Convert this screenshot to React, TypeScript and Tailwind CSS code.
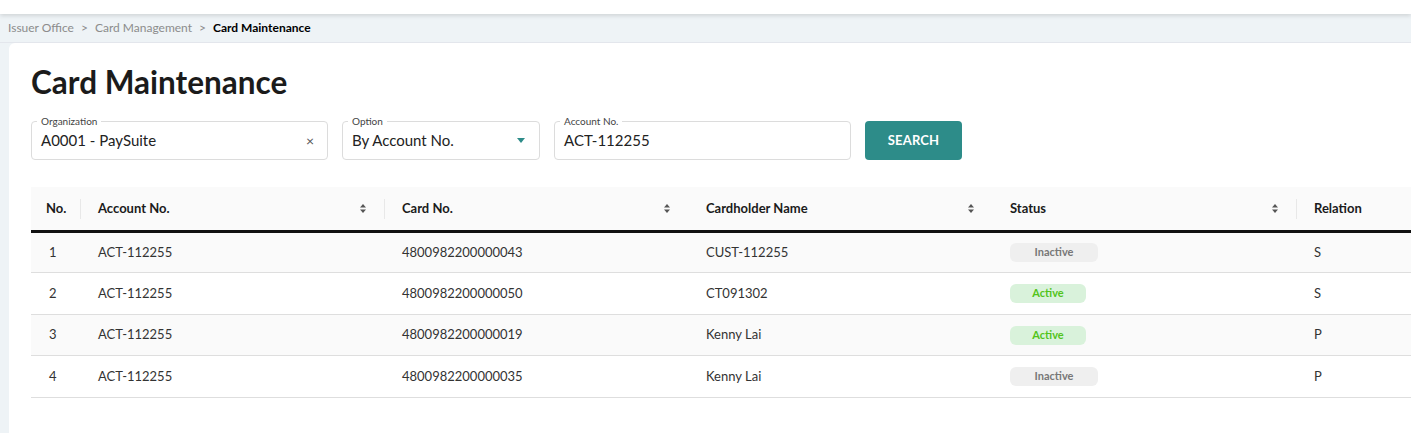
import React from 'react';

const rows = [
  { no: 1, account: 'ACT-112255', card: '4800982200000043', name: 'CUST-112255', active: false, relation: 'S' },
  { no: 2, account: 'ACT-112255', card: '4800982200000050', name: 'CT091302', active: true, relation: 'S' },
  { no: 3, account: 'ACT-112255', card: '4800982200000019', name: 'Kenny Lai', active: true, relation: 'P' },
  { no: 4, account: 'ACT-112255', card: '4800982200000035', name: 'Kenny Lai', active: false, relation: 'P' },
];

function SortIcon() {
  return (
    <svg width="6" height="9" viewBox="0 0 6 9" className="fill-[#555]">
      <path d="M3 0 L6 3.5 H0 Z" />
      <path d="M3 9 L6 5.5 H0 Z" />
    </svg>
  );
}

function Field({ label, children, width }: { label: string; children: React.ReactNode; width: string }) {
  return (
    <div className={`relative h-[39px] ${width} rounded-[4px] border border-[#dcdcdc] flex items-center px-[9px]`}>
      <span className="absolute -top-[7px] left-[5px] bg-white px-[4px] text-[10px] leading-[12px] text-[#444]">{label}</span>
      {children}
    </div>
  );
}

export default function App() {
  return (
    <div className="w-[1411px] h-[433px] overflow-hidden bg-[#eef3f6] font-['Lato',sans-serif] text-[#333]">
      {/* Top header strip */}
      <div className="h-[14px] bg-white shadow-[0_2px_4px_rgba(0,0,0,0.12)] relative z-10" />

      {/* Breadcrumb */}
      <div className="h-[29px] flex items-center px-[8px] text-[12px] gap-[7px] border-b border-[#e3e6ec]">
        <span className="text-[#8c8c8c]">Issuer Office</span>
        <span className="text-[#8c8c8c]">&gt;</span>
        <span className="text-[#8c8c8c]">Card Management</span>
        <span className="text-[#8c8c8c]">&gt;</span>
        <span className="font-bold text-black">Card Maintenance</span>
      </div>

      {/* Main card */}
      <div className="ml-[9px] h-full bg-white rounded-tl-[6px] pl-[22px] pt-[21px]">
        <h1 className="text-[31.5px] leading-[36px] font-bold text-[#1b1b1b]">Card Maintenance</h1>

        <div className="flex items-center mt-[21px] gap-[14px]">
          <Field label="Organization" width="w-[297px]">
            <span className="text-[15px] text-[#222] flex-1">A0001 - PaySuite</span>
            <span className="text-[14px] text-[#555] mr-[4px]">×</span>
          </Field>
          <Field label="Option" width="w-[198px]">
            <span className="text-[15px] text-[#222] flex-1">By Account No.</span>
            <svg width="8" height="5" viewBox="0 0 8 5" className="mr-[5px] fill-[#2d8c89]">
              <path d="M0 0 H8 L4 5 Z" />
            </svg>
          </Field>
          <Field label="Account No." width="w-[297px]">
            <span className="text-[15px] text-[#222]">ACT-112255</span>
          </Field>
          <button className="h-[39px] w-[97px] rounded-[4px] bg-[#2d8c89] text-white text-[13px] font-bold tracking-[0.2px]">
            SEARCH
          </button>
        </div>

        {/* Table */}
        <table className="mt-[27px] w-[1500px] border-collapse text-[13px] table-fixed">
          <colgroup>
            <col className="w-[50px]" />
            <col className="w-[304px]" />
            <col className="w-[304px]" />
            <col className="w-[304px]" />
            <col className="w-[304px]" />
            <col />
          </colgroup>
          <thead>
            <tr className="bg-[#fafafa] h-[44px] border-b-[3px] border-[#111]">
              <th className="text-left font-bold text-[#1b1b1b] pl-[15px] relative">
                No.
                <span className="absolute right-0 top-[12px] h-[20px] w-px bg-[#e8e8e8]" />
              </th>
              {['Account No.', 'Card No.', 'Cardholder Name', 'Status'].map((h, i) => (
                <th key={h} className="text-left font-bold text-[#1b1b1b] pl-[17px] relative">
                  <div className="flex items-center justify-between pr-[19px]">
                    <span>{h}</span>
                    <SortIcon />
                  </div>
                  {(i === 0 || i === 3) && <span className="absolute right-0 top-[12px] h-[20px] w-px bg-[#e8e8e8]" />}
                </th>
              ))}
              <th className="text-left font-bold text-[#1b1b1b] pl-[17px]">Relation</th>
            </tr>
          </thead>
          <tbody>
            {rows.map((r, i) => (
              <tr key={r.no} className={`h-[41.5px] border-b border-[#dedede] ${i % 2 === 0 ? 'bg-[#fafafa]' : 'bg-white'}`}>
                <td className="pl-[18px] text-[#333]">{r.no}</td>
                <td className="pl-[17px]">{r.account}</td>
                <td className="pl-[17px]">{r.card}</td>
                <td className="pl-[17px]">{r.name}</td>
                <td className="pl-[17px]">
                  {r.active ? (
                    <span className="inline-flex items-center justify-center w-[76px] h-[19px] rounded-[6px] bg-[#d9f2db] text-[#52c41a] text-[11px] font-bold">
                      Active
                    </span>
                  ) : (
                    <span className="inline-flex items-center justify-center w-[88px] h-[19px] rounded-[6px] bg-[#efefef] text-[#777] text-[11px] font-bold">
                      Inactive
                    </span>
                  )}
                </td>
                <td className="pl-[17px]">{r.relation}</td>
              </tr>
            ))}
          </tbody>
        </table>
      </div>
    </div>
  );
}
